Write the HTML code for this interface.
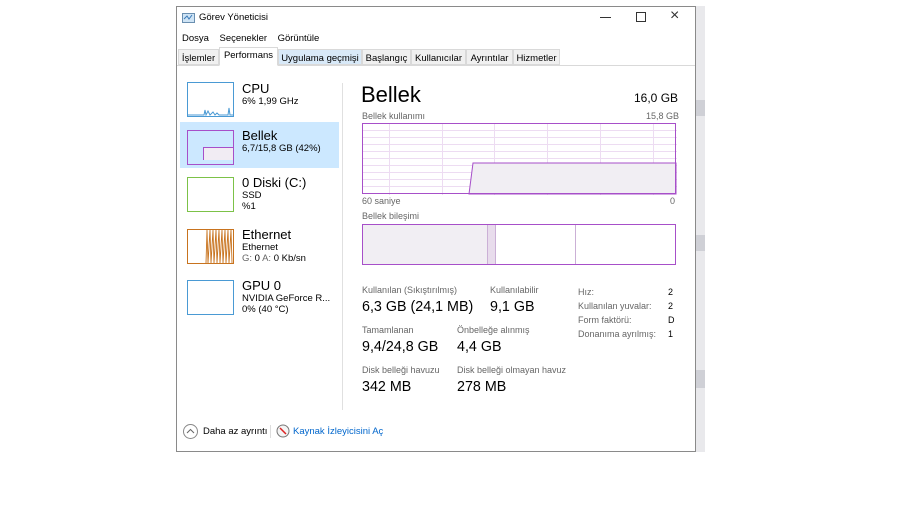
<!DOCTYPE html>
<html><head><meta charset="utf-8"><style>
*{margin:0;padding:0;box-sizing:border-box}
body{width:900px;height:507px;background:#fff;position:relative;overflow:hidden;font-family:"Liberation Sans",sans-serif;color:#000}
.a{position:absolute;white-space:nowrap}
.s{font-size:11px}
.g{color:#666}
.win{position:absolute;left:176px;top:6px;width:520px;height:446px;border:1px solid #8a8a8a;background:#fff}
.tab{position:absolute;top:49px;height:16px;font-size:9.5px;padding:3px 0 0 0;text-align:center;border:1px solid #d9d9d9;background:#f0f0f0;overflow:hidden}
.th{position:absolute;left:187px;width:47px;height:35px;border:1px solid}
</style></head><body>
<div class="a" style="left:696px;top:6px;width:9px;height:446px;background:#e9e9ec"></div>
<div class="a" style="left:696px;top:100px;width:9px;height:16px;background:#cfd0d6"></div>
<div class="a" style="left:696px;top:235px;width:9px;height:16px;background:#cfd0d6"></div>
<div class="a" style="left:696px;top:370px;width:9px;height:18px;background:#cfd0d6"></div>
<div class="win"></div>
<svg class="a" style="left:182px;top:12px" width="14" height="12"><rect x="0.5" y="1.5" width="12" height="9" fill="#cfe4f5" stroke="#6a8fb0"/><path d="M2 7 L5 4 L7 7 L10 3" stroke="#3a7ab8" fill="none"/></svg>
<div class="a" style="left:199px;top:12px;font-size:9.5px">Görev Yöneticisi</div>
<div class="a" style="left:600px;top:17px;width:11px;height:1px;background:#333"></div>
<div class="a" style="left:636px;top:12px;width:10px;height:10px;border:1px solid #333"></div>
<div class="a" style="left:670px;top:7px;font-size:16px;color:#333">×</div>
<div class="a" style="left:182px;top:33px;font-size:9.5px">Dosya&nbsp;&nbsp;&nbsp;&nbsp;Seçenekler&nbsp;&nbsp;&nbsp;&nbsp;Görüntüle</div>
<div class="a" style="left:177px;top:65px;width:518px;height:1px;background:#d9d9d9"></div>
<div class="tab" style="left:178px;width:41px">İşlemler</div>
<div class="tab" style="left:219px;top:47px;height:19px;width:59px;background:#fff;border-bottom-color:#fff;padding-top:2px">Performans</div>
<div class="tab" style="left:278px;width:84px;background:#d8e9f8">Uygulama geçmişi</div>
<div class="tab" style="left:362px;width:49px">Başlangıç</div>
<div class="tab" style="left:411px;width:55px">Kullanıcılar</div>
<div class="tab" style="left:466px;width:47px">Ayrıntılar</div>
<div class="tab" style="left:513px;width:47px">Hizmetler</div>

<div class="a" style="left:180px;top:122px;width:159px;height:46px;background:#cce8ff"></div>
<div class="th" style="top:82px;border-color:#4a9ad4"></div>
<svg class="a" style="left:188px;top:104px" width="45" height="12"><path d="M0 11 L16 11 L17 6 L18 11 L20 7 L22 11 L25 8 L27 11 L29 9 L31 11 L40 11 L41 4 L42 11 L45 11" stroke="#4a9ad4" fill="none"/></svg>
<div class="th" style="top:130px;border-color:#a74fc9"></div>
<div class="a" style="left:203px;top:147px;width:30px;height:13px;border-left:1px solid #a74fc9;border-top:1px solid #a74fc9;background:#f1ecf3"></div>
<div class="th" style="top:177px;border-color:#7cc248"></div>
<div class="th" style="top:229px;border-color:#c8731e"></div>
<svg class="a" style="left:188px;top:230px" width="45" height="33"><path d="M18 33 L19 0 L20 33 L22 0 L23 33 L25 0 L26 33 L28 0 L29 33 L31 0 L32 33 L34 0 L35 33 L37 0 L38 33 L40 0 L41 33 L43 0 L44 33" stroke="#c8731e" fill="none" stroke-width="0.9"/></svg>
<div class="th" style="top:280px;border-color:#4a9ad4"></div>

<div class="a" style="left:242px;top:81px;font-size:13px">CPU</div>
<div class="a" style="left:242px;top:96px;font-size:9.5px">6% 1,99 GHz</div>
<div class="a" style="left:242px;top:128px;font-size:13px">Bellek</div>
<div class="a" style="left:242px;top:143px;font-size:9.5px">6,7/15,8 GB (42%)</div>
<div class="a" style="left:242px;top:175px;font-size:13px">0 Diski (C:)</div>
<div class="a" style="left:242px;top:190px;font-size:9.5px">SSD</div>
<div class="a" style="left:242px;top:201px;font-size:9.5px">%1</div>
<div class="a" style="left:242px;top:227px;font-size:13px">Ethernet</div>
<div class="a" style="left:242px;top:242px;font-size:9.5px">Ethernet</div>
<div class="a" style="left:242px;top:253px;font-size:9.5px"><span class="g">G:</span> 0 <span class="g">A:</span> 0 Kb/sn</div>
<div class="a" style="left:242px;top:278px;font-size:13px">GPU 0</div>
<div class="a" style="left:242px;top:293px;font-size:9.5px">NVIDIA GeForce R...</div>
<div class="a" style="left:242px;top:304px;font-size:9.5px">0% (40 °C)</div>
<div class="a" style="left:342px;top:83px;width:1px;height:327px;background:#e0e0e0"></div>

<div class="a" style="left:361px;top:82px;font-size:22px">Bellek</div>
<div class="a" style="left:634px;top:91px;font-size:12px">16,0 GB</div>
<div class="a g" style="left:362px;top:111px;font-size:9px">Bellek kullanımı</div>
<div class="a g" style="left:646px;top:111px;font-size:9px">15,8 GB</div>
<svg class="a" style="left:362px;top:123px" width="315" height="72">
<g stroke="#eddcf2" stroke-width="1">
<path d="M0 7.5H315M0 14.5H315M0 21.5H315M0 28.5H315M0 35.5H315M0 42.5H315M0 49.5H315M0 56.5H315M0 63.5H315"/>
<path d="M27.5 0V72M80.5 0V72M132.5 0V72M185.5 0V72M238.5 0V72M291.5 0V72"/>
</g>
<path d="M107 71 L111 40 L314 40 L314 71 Z" fill="#f1eef3" stroke="#a74fc9"/>
<rect x="0.5" y="0.5" width="313" height="70" fill="none" stroke="#a74fc9"/>
</svg>
<div class="a g" style="left:362px;top:196px;font-size:9px">60 saniye</div>
<div class="a g" style="left:670px;top:196px;font-size:9px">0</div>
<div class="a g" style="left:362px;top:211px;font-size:9px">Bellek bileşimi</div>
<svg class="a" style="left:362px;top:224px" width="315" height="42">
<rect x="0.5" y="0.5" width="125" height="40" fill="#f1eef3"/>
<rect x="125.5" y="0.5" width="8" height="40" fill="#e8dcec" stroke="#cbb0d6"/>
<path d="M213.5 0V41" stroke="#cbb0d6"/>
<rect x="0.5" y="0.5" width="313" height="40" fill="none" stroke="#a74fc9"/>
</svg>

<div class="a g" style="left:362px;top:285px;font-size:9px">Kullanılan (Sıkıştırılmış)</div>
<div class="a" style="left:362px;top:299px;font-size:14.3px">6,3 GB (24,1 MB)</div>
<div class="a g" style="left:490px;top:285px;font-size:9px">Kullanılabilir</div>
<div class="a" style="left:490px;top:299px;font-size:14.3px">9,1 GB</div>
<div class="a g" style="left:362px;top:325px;font-size:9px">Tamamlanan</div>
<div class="a" style="left:362px;top:339px;font-size:14.3px">9,4/24,8 GB</div>
<div class="a g" style="left:457px;top:325px;font-size:9px">Önbelleğe alınmış</div>
<div class="a" style="left:457px;top:339px;font-size:14.3px">4,4 GB</div>
<div class="a g" style="left:362px;top:365px;font-size:9px">Disk belleği havuzu</div>
<div class="a" style="left:362px;top:379px;font-size:14.3px">342 MB</div>
<div class="a g" style="left:457px;top:365px;font-size:9px">Disk belleği olmayan havuz</div>
<div class="a" style="left:457px;top:379px;font-size:14.3px">278 MB</div>
<div class="a g" style="left:578px;top:285px;font-size:9px;line-height:14px">Hız:<br>Kullanılan yuvalar:<br>Form faktörü:<br>Donanıma ayrılmış:</div>
<div class="a" style="left:668px;top:285px;font-size:9px;line-height:14px">2<br>2<br>D<br>1</div>

<div class="a" style="left:183px;top:424px;width:15px;height:15px;border:1px solid #888;border-radius:50%"></div>
<svg class="a" style="left:186px;top:428px" width="9" height="6"><path d="M1 5 L4.5 1.5 L8 5" stroke="#666" fill="none"/></svg>
<div class="a" style="left:203px;top:426px;font-size:9.5px">Daha az ayrıntı</div>
<div class="a" style="left:270px;top:425px;width:1px;height:13px;background:#ddd"></div>
<svg class="a" style="left:276px;top:424px" width="14" height="14"><circle cx="7" cy="7" r="6" fill="#f4f4f4" stroke="#777"/><path d="M4 4 L10 10" stroke="#d22" stroke-width="1.5"/></svg>
<div class="a" style="left:293px;top:426px;font-size:9.5px;color:#0066cc">Kaynak İzleyicisini Aç</div>
</body></html>
